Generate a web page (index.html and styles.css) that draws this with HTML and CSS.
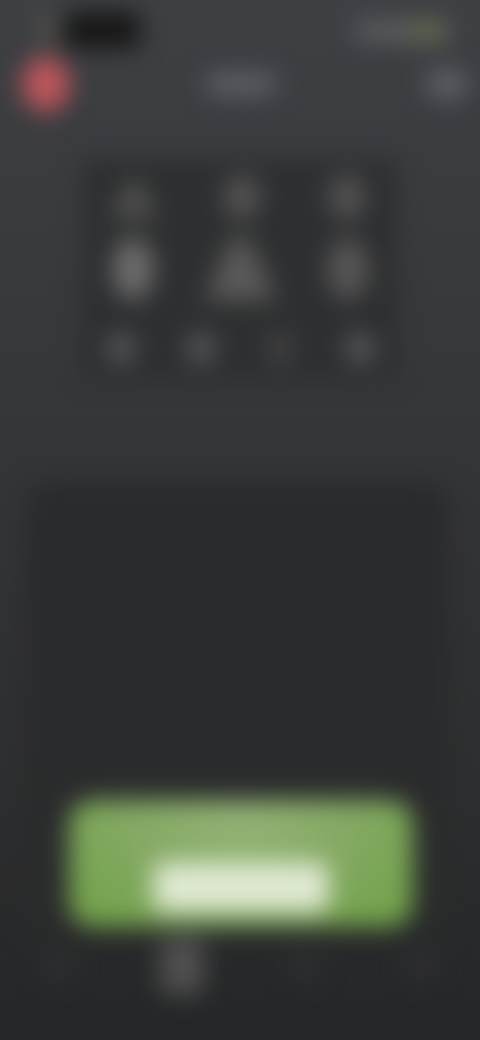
FILE: index.html
```html
<!DOCTYPE html>
<html lang="en">
<head>
<meta charset="utf-8">
<title>Blurred screen</title>
<link rel="stylesheet" href="styles.css">
</head>
<body>
<main class="screen">
  <div class="status">
    <div class="status-left"><span class="tick"></span><span class="notch"></span></div>
    <div class="status-right"></div>
  </div>
  <header class="header">
    <span class="avatar"></span>
    <span class="title"></span>
    <span class="action"></span>
  </header>
  <section class="tiles">
    <div class="row row-top">
      <span class="tile tri-sm"></span>
      <span class="tile oval-sm"></span>
      <span class="tile oval-sm"></span>
    </div>
    <div class="row row-mid">
      <span class="tile oval-lg bright"></span>
      <span class="tile tri-lg"></span>
      <span class="tile oval-lg"></span>
    </div>
    <div class="row row-low">
      <span class="dot"></span>
      <span class="dot"></span>
      <span class="dot faint"></span>
      <span class="dot"></span>
    </div>
  </section>
  <section class="panel">
    <div class="cta"><span class="cta-label"></span></div>
  </section>
  <nav class="tabs">
    <span class="tab"></span>
    <span class="tab active"></span>
    <span class="tab"></span>
    <span class="tab"></span>
  </nav>
</main>
</body>
</html>
```
FILE: styles.css
```css
html, body {
  margin: 0;
  height: 100%;
  overflow: hidden;
}
body {
  background: linear-gradient(180deg, #3e4044 0, #37393c 300px, #323335 560px, #2d2e2f 800px, #252627 1040px);
}
.screen {
  width: 480px;
  height: 1040px;
  display: flex;
  flex-direction: column;
  filter: blur(12px);
}
.status {
  height: 46px;
  padding: 12px 30px 0 42px;
  box-sizing: border-box;
  display: flex;
  justify-content: space-between;
}
.status-left { display: flex; gap: 10px; }
.tick { width: 12px; height: 26px; margin-top: 3px; background: #5e5c4a; border-radius: 4px; }
.notch { width: 76px; height: 36px; background: #161616; border-radius: 6px; }
.status-right {
  width: 96px;
  height: 20px;
  margin-top: 9px;
  border-radius: 8px;
  background: linear-gradient(90deg, #5c5e62 0, #5c5e62 35%, #626755 60%, #6c7050 85%, #5c5e62 100%);
}
.header {
  height: 76px;
  padding: 0 12px 0 22px;
  display: flex;
  align-items: center;
  justify-content: space-between;
}
.avatar { width: 48px; height: 56px; border-radius: 50%; background: #be565c; }
.title { width: 72px; height: 22px; border-radius: 11px; background: #5f6165; margin-left: -14px; }
.action { width: 42px; height: 30px; border-radius: 15px; background: #5e6065; }
.tiles {
  width: 314px;
  height: 220px;
  margin: 37px 0 0 83px;
  background: #2e2f30;
  border-radius: 8px;
  display: flex;
  flex-direction: column;
}
.row { display: flex; }
.row-top { justify-content: space-between; padding: 15px 28px 0 29px; height: 52px; }
.row-mid { justify-content: space-between; padding: 12px 28px 0 29px; height: 76px; }
.row-low { justify-content: space-between; padding: 18px 22px 0 23px; }
.tile { display: block; }
.tri-sm { width: 50px; height: 44px; clip-path: polygon(50% 0, 100% 100%, 0 100%); background: #525252; margin-left: -3px; }
.oval-sm { width: 38px; height: 46px; border-radius: 50%; background: #525253; margin: 0 3px; }
.oval-lg { width: 42px; height: 62px; border-radius: 50%; background: #565657; }
.bright { background: #6c6c6d; }
.tri-lg { width: 72px; height: 62px; clip-path: polygon(38% 0, 62% 0, 100% 100%, 0 100%); background: #5a5a5a; }
.dot { width: 30px; height: 32px; border-radius: 50%; background: #565758; }
.dot.faint { background: #454546; width: 24px; margin: 0 3px; }
.panel {
  width: 424px;
  height: 450px;
  margin: 103px 0 0 26px;
  background: #2a2b2c;
  border-radius: 24px 24px 0 0;
  box-sizing: border-box;
  padding: 318px 37px 0 43px;
}
.cta {
  width: 344px;
  height: 127px;
  border-radius: 24px;
  background: radial-gradient(ellipse 60% 90% at 50% 20%, #93b276 0, #82a860 60%, #74a34e 100%);
  display: flex;
  justify-content: center;
  padding-top: 62px;
  box-sizing: border-box;
}
.cta-label { width: 176px; height: 50px; border-radius: 12px; background: #dfe9d2; }
.tabs {
  flex: 1;
  display: flex;
  padding: 10px 0 0 0;
  justify-content: space-around;
  align-items: flex-start;
  margin-top: -4px;
}
.tab { width: 30px; height: 30px; margin-top: 12px; border-radius: 6px; background: #2e2f31; }
.active { width: 44px; height: 56px; margin-top: 0; background: #505050; }
```
